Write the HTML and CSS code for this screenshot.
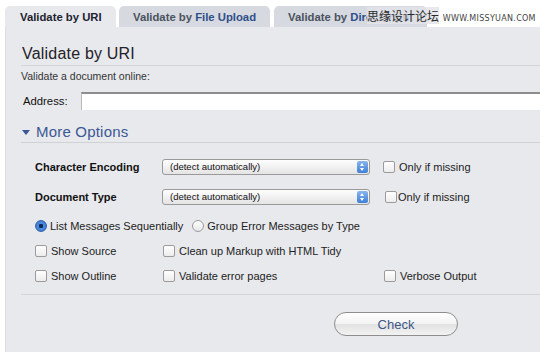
FILE: index.html
```html
<!DOCTYPE html>
<html lang="en">
<head>
  <meta charset="UTF-8" />
  <title>Validate by URI</title>
  <link rel="stylesheet" href="styles.css">
</head>
<body>
  <div class="tabs">
    <span class="tab active">Validate by URI</span>
    <span class="tab">Validate by <em>File Upload</em></span>
    <span class="tab last">Validate by <em>Direct Input</em></span>
    <span class="watermark"><span class="cn">思缘设计论坛</span> <small>WWW.MISSYUAN.COM</small></span>
  </div>

  <div class="panel">
    <h2>Validate by URI</h2>
    <p class="intro">Validate a document online:</p>

    <div class="address">
      <label>Address:</label>
      <div class="field"></div>
    </div>

    <h3 class="more"><span class="caret"></span>More Options</h3>

    <div class="options">
      <div class="row">
        <span class="name">Character Encoding</span>
        <div class="select">(detect automatically)<span class="arrows"></span></div>
        <span class="check"><span class="box"></span>Only if missing</span>
      </div>
      <div class="row">
        <span class="name">Document Type</span>
        <div class="select">(detect automatically)<span class="arrows"></span></div>
        <span class="check tight"><span class="box"></span>Only if missing</span>
      </div>

      <div class="line radios">
        <span class="check"><span class="radio on"></span>List Messages Sequentially</span>
        <span class="check"><span class="radio"></span>Group Error Messages by Type</span>
      </div>

      <div class="grid">
        <span class="check"><span class="box"></span>Show Source</span>
        <span class="check"><span class="box"></span>Clean up Markup with HTML Tidy</span>
        <span></span>
        <span class="check"><span class="box"></span>Show Outline</span>
        <span class="check"><span class="box"></span>Validate error pages</span>
        <span class="check"><span class="box"></span>Verbose Output</span>
      </div>
    </div>

    <div class="submit">
      <button class="btn">Check</button>
    </div>
  </div>
</body>
</html>
```

FILE: styles.css
```css
html, body {
  margin: 0;
  padding: 0;
  background: #fff;
  font-family: "Liberation Sans", Arial, sans-serif;
  color: #222;
  overflow: hidden;
}

.tabs {
  display: flex;
  align-items: flex-end;
  padding: 6px 0 0 5px;
  height: 21px;
  position: relative;
}

.tab {
  font-size: 11.3px;
  font-weight: bold;
  color: #4a5260;
  background: #d6d9df;
  border-radius: 5px 5px 0 0;
  padding: 0 14px;
  height: 21px;
  line-height: 22px;
  margin-right: 4px;
  white-space: nowrap;
}

.tab em {
  font-style: normal;
  color: #2f4f8a;
}

.tab.active {
  background: #e8e9ed;
  color: #1d2330;
  padding: 0 15px;
  width: 81px;
  margin-right: 3px;
}

.tab.last {
  width: 125px;
  overflow: hidden;
}

/* site watermark sitting over the last tab */
.watermark {
  position: absolute;
  left: 367px;
  top: 7px;
  font-family: "Noto Sans CJK SC", sans-serif;
  font-size: 12px;
  color: #2a2a2a;
  height: 18px;
  line-height: 18px;
  white-space: nowrap;
}

.watermark .cn {
  background: rgba(226, 228, 232, 0.8);
}

.watermark small {
  font-family: "DejaVu Sans", sans-serif;
  font-size: 8px;
  letter-spacing: 0.3px;
  color: #444;
  margin-left: 1px;
}

.panel {
  margin-left: 5px;
  height: 325px;
  background: #e8e9ed;
  border-left: 1px solid #dcdde1;
  padding: 0 0 0 15px;
}

h2 {
  margin: 0;
  padding: 18px 0 2px 1px;
  font-size: 16px;
  font-weight: normal;
  color: #1f2228;
  border-bottom: 1px solid #d2d4d8;
  letter-spacing: 0.2px;
}

.intro {
  margin: 0;
  padding: 4px 0 0 0;
  font-size: 10.5px;
  color: #333;
}

.address {
  display: flex;
  align-items: center;
  margin-top: 10px;
}

.address label {
  font-size: 11.3px;
  color: #111;
  padding-left: 2px;
  width: 58px;
}

.field {
  flex: 1;
  height: 16px;
  background: #fff;
  border-top: 2px solid #8d8d8d;
  border-left: 1px solid #b8b8b8;
}

.more {
  margin: 13px 0 0 0;
  padding-bottom: 2px;
  font-size: 15px;
  font-weight: normal;
  color: #3a5895;
  border-bottom: 1px solid #cfd1d5;
  display: flex;
  align-items: center;
  letter-spacing: 0.2px;
}

.caret {
  width: 0;
  height: 0;
  border-left: 4px solid transparent;
  border-right: 4px solid transparent;
  border-top: 5px solid #3a5895;
  margin: 1px 6px 0 1px;
}

.options {
  padding: 16px 0 0 14px;
}

.row {
  display: flex;
  align-items: center;
  height: 16px;
  margin-bottom: 14px;
}

.name {
  width: 127px;
  font-size: 11px;
  font-weight: bold;
  color: #111;
}

.select {
  width: 199px;
  height: 14px;
  border: 1px solid #9a9a9a;
  border-radius: 3px;
  background: linear-gradient(#fefefe, #e4e4e4);
  font-size: 9.5px;
  line-height: 14px;
  padding-left: 7px;
  position: relative;
  color: #111;
}

.arrows {
  position: absolute;
  right: 1px;
  top: 1px;
  width: 11px;
  height: 12px;
  border-radius: 2px;
  background: linear-gradient(#8ab6ec, #3f7fd6);
}

.arrows::before, .arrows::after {
  content: "";
  position: absolute;
  left: 3px;
  border-left: 2.5px solid transparent;
  border-right: 2.5px solid transparent;
}

.arrows::before {
  top: 2px;
  border-bottom: 3px solid #fff;
}

.arrows::after {
  bottom: 2px;
  border-top: 3px solid #fff;
}

.check {
  display: inline-flex;
  align-items: center;
  font-size: 11px;
  color: #222;
  white-space: nowrap;
}

.row .check {
  margin-left: 13px;
}

.row .check.tight {
  margin-left: 15px;
}

.box {
  width: 10px;
  height: 10px;
  border: 1px solid #9b9b9b;
  border-radius: 2px;
  background: linear-gradient(#fff, #ececec);
  margin-right: 4px;
}

.tight .box {
  margin-right: 1px;
}

.radio {
  width: 10px;
  height: 10px;
  border: 1px solid #9b9b9b;
  border-radius: 50%;
  background: linear-gradient(#fff, #e6e6e6);
  margin-right: 3px;
}

.radio.on {
  background: radial-gradient(circle, #0d2a5c 0 2px, #4f8fdf 2.5px, #2d6cc6 100%);
  border-color: #3164ad;
}

.line {
  display: flex;
  gap: 9px;
  height: 16px;
  align-items: center;
  margin-top: -1px;
}

.grid {
  display: grid;
  grid-template-columns: 128px 221px auto;
  row-gap: 9px;
  margin-top: 9px;
}

.grid .check {
  height: 16px;
}

.submit {
  border-top: 1px solid #d2d4d8;
  margin-top: 10px;
  padding-top: 17px;
  padding-left: 313px;
}

.btn {
  width: 124px;
  height: 24px;
  border: 1px solid #8e8e8e;
  border-radius: 12px;
  background: linear-gradient(#ffffff, #f3f3f3 50%, #e2e2e2 51%, #f2f2f2);
  font-family: "Liberation Sans", Arial, sans-serif;
  font-size: 13px;
  color: #3b5686;
  padding: 0;
}
```
